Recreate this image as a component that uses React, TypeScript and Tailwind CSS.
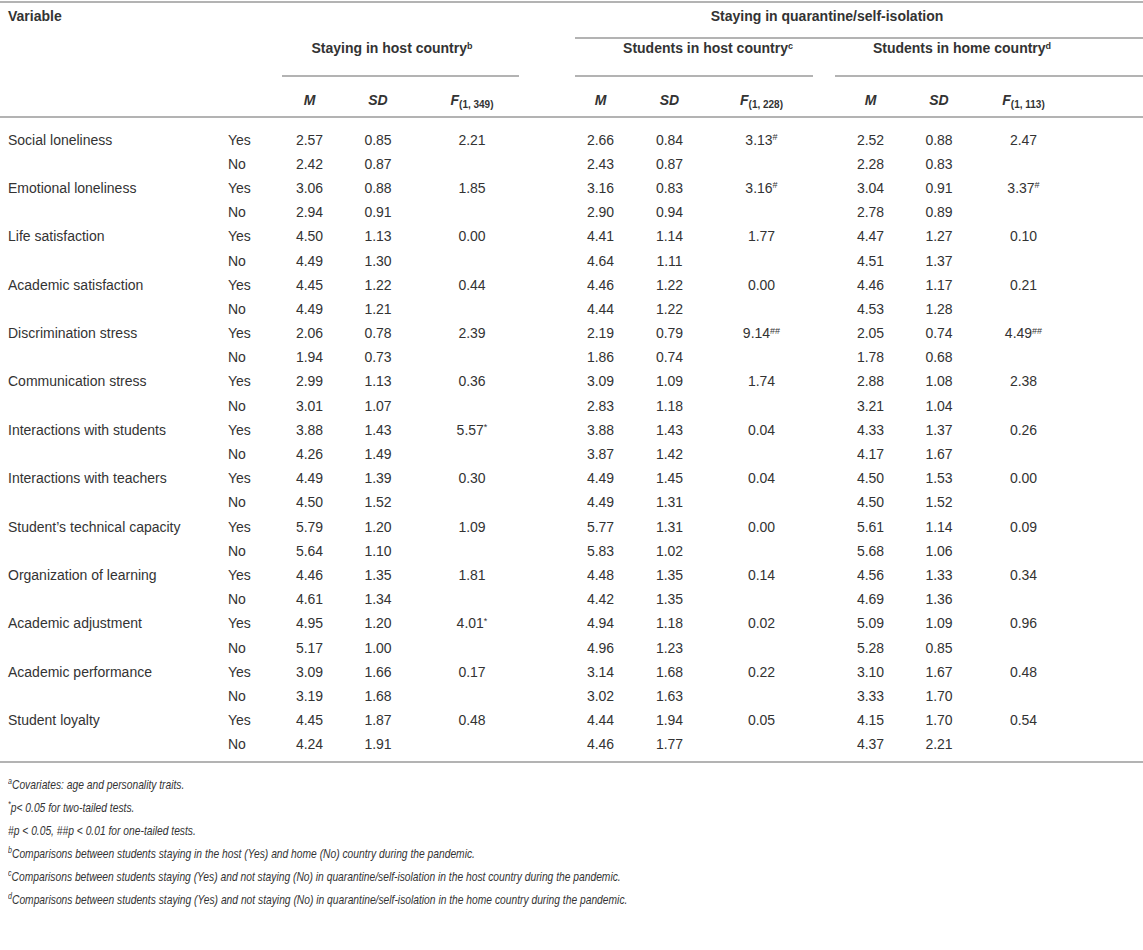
import React from "react";

type Group = [string, string, string?];
type Row = { label: string; yes: [Group, Group, Group]; no: [Group, Group, Group] };

const rows: Row[] = [
  { label: "Social loneliness", yes: [["2.57", "0.85", "2.21"], ["2.66", "0.84", "3.13|#"], ["2.52", "0.88", "2.47"]], no: [["2.42", "0.87"], ["2.43", "0.87"], ["2.28", "0.83"]] },
  { label: "Emotional loneliness", yes: [["3.06", "0.88", "1.85"], ["3.16", "0.83", "3.16|#"], ["3.04", "0.91", "3.37|#"]], no: [["2.94", "0.91"], ["2.90", "0.94"], ["2.78", "0.89"]] },
  { label: "Life satisfaction", yes: [["4.50", "1.13", "0.00"], ["4.41", "1.14", "1.77"], ["4.47", "1.27", "0.10"]], no: [["4.49", "1.30"], ["4.64", "1.11"], ["4.51", "1.37"]] },
  { label: "Academic satisfaction", yes: [["4.45", "1.22", "0.44"], ["4.46", "1.22", "0.00"], ["4.46", "1.17", "0.21"]], no: [["4.49", "1.21"], ["4.44", "1.22"], ["4.53", "1.28"]] },
  { label: "Discrimination stress", yes: [["2.06", "0.78", "2.39"], ["2.19", "0.79", "9.14|##"], ["2.05", "0.74", "4.49|##"]], no: [["1.94", "0.73"], ["1.86", "0.74"], ["1.78", "0.68"]] },
  { label: "Communication stress", yes: [["2.99", "1.13", "0.36"], ["3.09", "1.09", "1.74"], ["2.88", "1.08", "2.38"]], no: [["3.01", "1.07"], ["2.83", "1.18"], ["3.21", "1.04"]] },
  { label: "Interactions with students", yes: [["3.88", "1.43", "5.57|*"], ["3.88", "1.43", "0.04"], ["4.33", "1.37", "0.26"]], no: [["4.26", "1.49"], ["3.87", "1.42"], ["4.17", "1.67"]] },
  { label: "Interactions with teachers", yes: [["4.49", "1.39", "0.30"], ["4.49", "1.45", "0.04"], ["4.50", "1.53", "0.00"]], no: [["4.50", "1.52"], ["4.49", "1.31"], ["4.50", "1.52"]] },
  { label: "Student\u2019s technical capacity", yes: [["5.79", "1.20", "1.09"], ["5.77", "1.31", "0.00"], ["5.61", "1.14", "0.09"]], no: [["5.64", "1.10"], ["5.83", "1.02"], ["5.68", "1.06"]] },
  { label: "Organization of learning", yes: [["4.46", "1.35", "1.81"], ["4.48", "1.35", "0.14"], ["4.56", "1.33", "0.34"]], no: [["4.61", "1.34"], ["4.42", "1.35"], ["4.69", "1.36"]] },
  { label: "Academic adjustment", yes: [["4.95", "1.20", "4.01|*"], ["4.94", "1.18", "0.02"], ["5.09", "1.09", "0.96"]], no: [["5.17", "1.00"], ["4.96", "1.23"], ["5.28", "0.85"]] },
  { label: "Academic performance", yes: [["3.09", "1.66", "0.17"], ["3.14", "1.68", "0.22"], ["3.10", "1.67", "0.48"]], no: [["3.19", "1.68"], ["3.02", "1.63"], ["3.33", "1.70"]] },
  { label: "Student loyalty", yes: [["4.45", "1.87", "0.48"], ["4.44", "1.94", "0.05"], ["4.15", "1.70", "0.54"]], no: [["4.24", "1.91"], ["4.46", "1.77"], ["4.37", "2.21"]] },
];

const GRID = "grid grid-cols-[220px_55px_69px_68px_120px_34px_69px_69px_115px_103px_34px_1fr]";

function FValue({ v }: { v?: string }) {
  if (!v) return null;
  const [num, mark] = v.split("|");
  return (
    <>
      {num}
      {mark && <sup className="text-[9px]">{mark}</sup>}
    </>
  );
}

function DataRow({ label, answer, groups }: { label: string; answer: string; groups: Group[] }) {
  return (
    <div className={`${GRID} h-[24.2px] items-center`}>
      <div className="pl-[8px]">{label}</div>
      <div className="pl-[8px]">{answer}</div>
      <div className="text-center">{groups[0][0]}</div>
      <div className="text-center">{groups[0][1]}</div>
      <div className="text-center"><FValue v={groups[0][2]} /></div>
      <div />
      <div className="text-center">{groups[1][0]}</div>
      <div className="text-center">{groups[1][1]}</div>
      <div className="text-center"><FValue v={groups[1][2]} /></div>
      <div className="text-center">{groups[2][0]}</div>
      <div className="text-center">{groups[2][1]}</div>
      <div className="pr-[52px] text-center"><FValue v={groups[2][2]} /></div>
    </div>
  );
}

function FHead({ df }: { df: string }) {
  return (
    <span className="font-bold italic">
      F<sub className="not-italic text-[10px]">{df}</sub>
    </span>
  );
}

export default function App() {
  return (
    <div className="w-[1143px] bg-white pt-[1px] text-[14px] leading-[17px] text-[#333] font-['Liberation_Sans',Arial,sans-serif]">
      <div className="h-[2px] bg-[#b3b3b3]" />

      {/* header */}
      <div className={`${GRID} border-b-2 border-[#b3b3b3] font-bold`}>
        <div className="col-span-2 row-start-1 pl-[8px] pt-[5px]">Variable</div>
        <div className="col-start-7 col-end-13 row-start-1 ml-[9px] border-b-2 border-[#b3b3b3] pt-[5px] pb-[12px] pr-[64px] text-center">
          Staying in quarantine/self-isolation
        </div>

        <div className="col-start-3 col-end-6 row-start-2 ml-[7px] mr-[13px] border-b-2 border-[#b3b3b3] pt-[1px] pb-[18px] pr-[17px] text-center">
          Staying in host country<sup className="text-[9px]">b</sup>
        </div>
        <div className="col-start-7 col-end-10 row-start-2 ml-[9px] mr-[6px] border-b-2 border-[#b3b3b3] pt-[1px] pb-[18px] pl-[28px] text-center">
          Students in host country<sup className="text-[9px]">c</sup>
        </div>
        <div className="col-start-10 col-end-13 row-start-2 ml-[16px] border-b-2 border-[#b3b3b3] pt-[1px] pb-[18px] pr-[54px] text-center">
          Students in home country<sup className="text-[9px]">d</sup>
        </div>

        <div className="col-start-3 row-start-3 pt-[15px] pb-[7px] text-center italic">M</div>
        <div className="col-start-4 row-start-3 pt-[15px] text-center italic">SD</div>
        <div className="col-start-5 row-start-3 pt-[15px] text-center"><FHead df="(1, 349)" /></div>
        <div className="col-start-7 row-start-3 pt-[15px] text-center italic">M</div>
        <div className="col-start-8 row-start-3 pt-[15px] text-center italic">SD</div>
        <div className="col-start-9 row-start-3 pt-[15px] text-center"><FHead df="(1, 228)" /></div>
        <div className="col-start-10 row-start-3 pt-[15px] text-center italic">M</div>
        <div className="col-start-11 row-start-3 pt-[15px] text-center italic">SD</div>
        <div className="col-start-12 row-start-3 pt-[15px] pr-[52px] text-center"><FHead df="(1, 113)" /></div>
      </div>

      {/* body */}
      <div className="pt-[10px] pb-[4px] border-b-2 border-[#b3b3b3]">
        {rows.map((r) => (
          <React.Fragment key={r.label}>
            <DataRow label={r.label} answer="Yes" groups={r.yes} />
            <DataRow label="" answer="No" groups={r.no} />
          </React.Fragment>
        ))}
      </div>

      {/* notes */}
      <div className="pt-[10px] pl-[8px]">
        <div className="origin-left scale-x-[0.79] text-[13px] leading-[23px] italic whitespace-nowrap">
          <p><sup className="text-[9px]">a</sup>Covariates: age and personality traits.</p>
          <p><sup className="text-[9px]">*</sup>p&lt; 0.05 for two-tailed tests.</p>
          <p>#p &lt; 0.05, ##p &lt; 0.01 for one-tailed tests.</p>
          <p><sup className="text-[9px]">b</sup>Comparisons between students staying in the host (Yes) and home (No) country during the pandemic.</p>
          <p><sup className="text-[9px]">c</sup>Comparisons between students staying (Yes) and not staying (No) in quarantine/self-isolation in the host country during the pandemic.</p>
          <p><sup className="text-[9px]">d</sup>Comparisons between students staying (Yes) and not staying (No) in quarantine/self-isolation in the home country during the pandemic.</p>
        </div>
      </div>
    </div>
  );
}
